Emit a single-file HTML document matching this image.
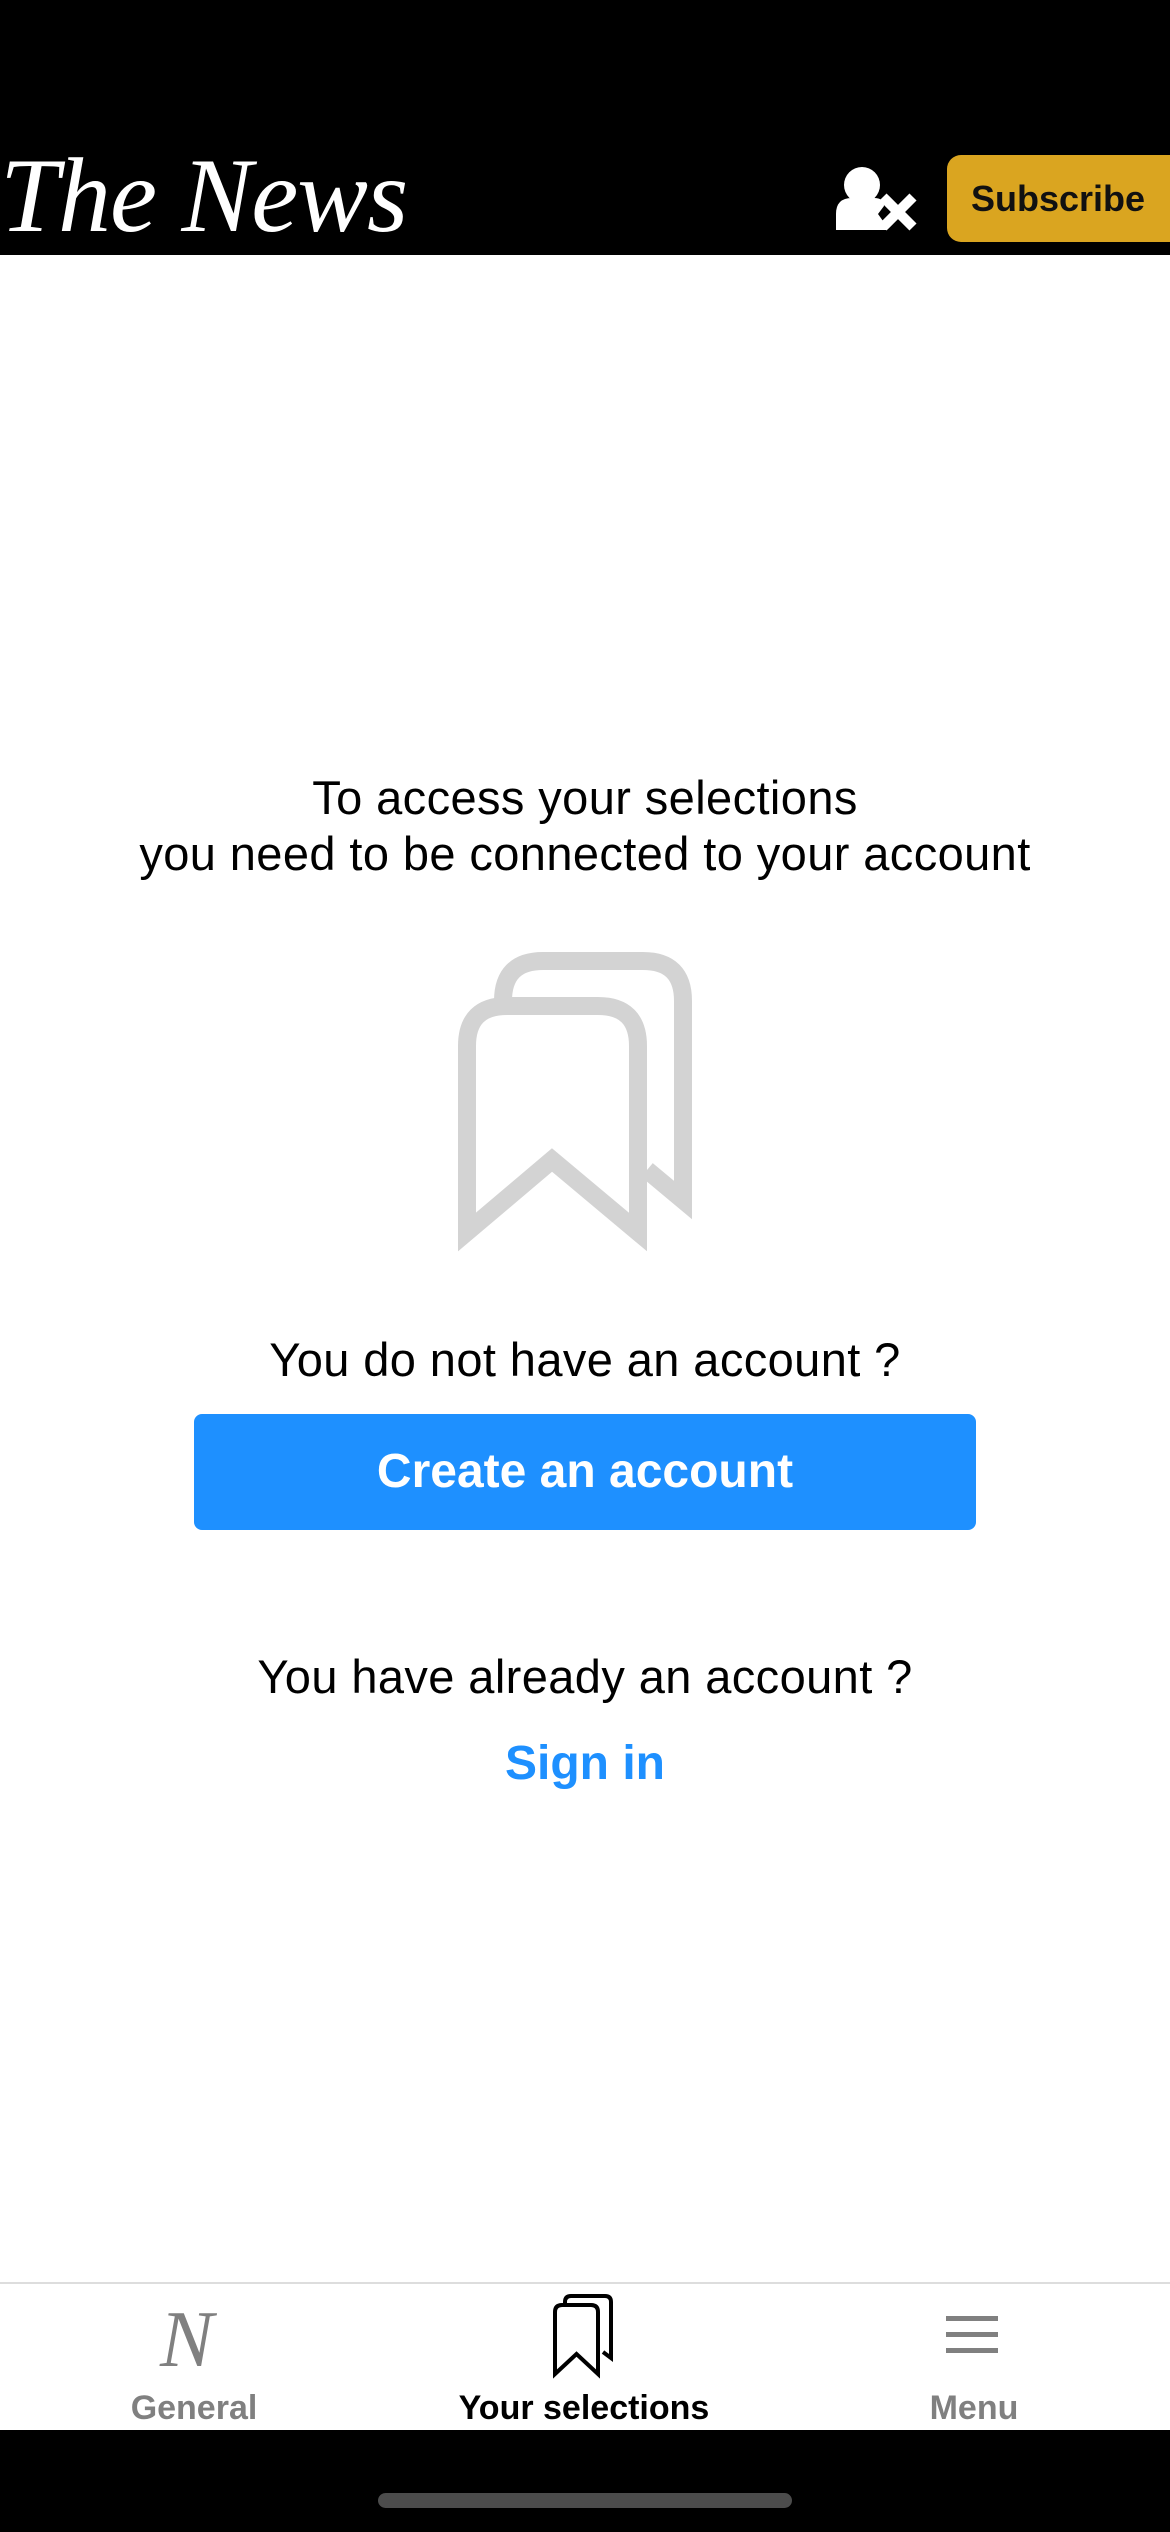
<!DOCTYPE html>
<html><head><meta charset="utf-8"><style>
html,body{margin:0;padding:0;width:1170px;height:2532px;overflow:hidden;background:#fff;font-family:"Liberation Sans",sans-serif;}
.hdr{position:absolute;left:0;top:0;width:1170px;height:255px;background:#000;}
.logo{position:absolute;left:0;top:146px;font-family:"Liberation Serif",serif;font-size:106px;color:#fff;line-height:100px;font-style:italic;letter-spacing:-1px;}
.sub{position:absolute;left:947px;top:155px;width:240px;height:87px;background:#DAA520;border-radius:14px;font-weight:bold;font-size:36px;line-height:87px;color:#111;padding-left:24px;box-sizing:border-box;}
.t{position:absolute;left:0;width:1170px;text-align:center;color:#000;font-size:47px;letter-spacing:0.4px;}
.btn{position:absolute;left:194px;top:1414px;width:782px;height:116px;background:#1E90FF;border-radius:8px;color:#fff;font-weight:bold;font-size:48px;line-height:116px;text-align:center;}
.tab{position:absolute;left:0;top:2282px;width:1170px;height:148px;border-top:2px solid #ddd;background:#fff;}
.lbl{position:absolute;top:2385px;font-size:34px;font-weight:bold;color:#808080;text-align:center;width:300px;line-height:46px;}
.bot{position:absolute;left:0;top:2430px;width:1170px;height:102px;background:#000;}
.home{position:absolute;left:378px;top:2493px;width:414px;height:15px;border-radius:8px;background:#4c4c4c;}
</style></head><body>
<div class="hdr">
<div class="logo">The News</div>
<svg style="position:absolute;left:820px;top:150px" width="110" height="100" viewBox="820 150 110 100">
<circle cx="862" cy="185" r="18" fill="#fff"/>
<path d="M836 230 V214 Q836 198 852 198 H874 Q884 198 884 206 L878 214 L888 228 L886 230 Z" fill="#fff"/>
<path d="M883 197 L913 227 M913 197 L883 227" stroke="#fff" stroke-width="10"/>
</svg>
<div class="sub">Subscribe</div>
</div>
<div class="t" style="top:770px;line-height:56px">To access your selections<br>you need to be connected to your account</div>
<svg style="position:absolute;left:0;top:0" width="1170" height="1300" viewBox="0 0 1170 1300">
<g fill="none" stroke="#d3d3d3" stroke-width="18" stroke-miterlimit="10">
<path d="M503 998 V1001 Q503 961 543 961 H643 Q683 961 683 1001 V1200 L647 1170"/>
<path d="M467 1232 V1046 Q467 1006 507 1006 H598 Q638 1006 638 1046 V1232 L552 1160 Z"/>
</g>
</svg>
<div class="t" style="top:1332px;line-height:56px">You do not have an account ?</div>
<div class="btn">Create an account</div>
<div class="t" style="top:1649px;line-height:56px">You have already an account ?</div>
<div class="t" style="top:1736px;line-height:56px;color:#1E90FF;font-weight:bold;font-size:48px;letter-spacing:0">Sign in</div>
<div class="tab"></div>
<div style="position:absolute;left:160px;top:2300px;width:70px;font-family:'Liberation Serif',serif;font-style:italic;font-size:80px;color:#808080;line-height:80px;">N</div>
<svg style="position:absolute;left:545px;top:2292px" width="75" height="90" viewBox="0 0 75 90">
<g fill="none" stroke="#000" stroke-width="4">
<path d="M20 12 V10 Q20 4 26 4 H60 Q66 4 66 10 V66 L58 60"/>
<path d="M10 82 V20 Q10 13 17 13 H46 Q53 13 53 20 V82 L31.5 62 Z"/>
</g>
</svg>
<div style="position:absolute;left:946px;top:2316px;width:52px;height:5px;background:#808080"></div>
<div style="position:absolute;left:946px;top:2332px;width:52px;height:5px;background:#808080"></div>
<div style="position:absolute;left:946px;top:2348px;width:52px;height:5px;background:#808080"></div>
<div class="lbl" style="left:44px">General</div>
<div class="lbl" style="left:434px;color:#000">Your selections</div>
<div class="lbl" style="left:824px">Menu</div>
<div class="bot"></div>
<div class="home"></div>
</body></html>
